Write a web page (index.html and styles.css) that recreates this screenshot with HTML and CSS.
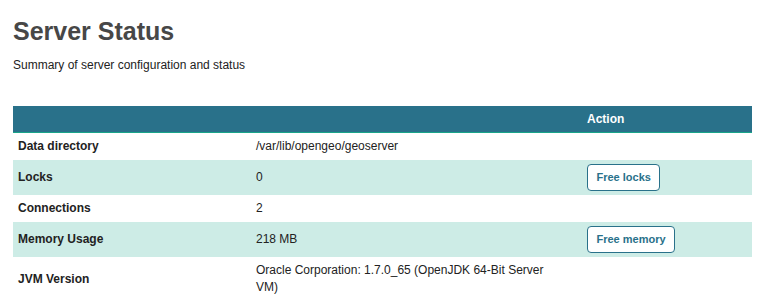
FILE: index.html
```html
<!DOCTYPE html>
<html lang="en">
  <head>
    <meta charset="UTF-8" />
    <title>Server Status</title>
    <link rel="stylesheet" href="styles.css">
  </head>
  <body>
    <h1 class="title">Server Status</h1>
    <p class="subtitle">Summary of server configuration and status</p>

    <table class="status">
      <colgroup>
        <col class="col-label" />
        <col class="col-value" />
        <col class="col-action" />
      </colgroup>
      <thead>
        <tr>
          <th></th>
          <th></th>
          <th>Action</th>
        </tr>
      </thead>
      <tbody>
        <tr>
          <td class="label">Data directory</td>
          <td>/var/lib/opengeo/geoserver</td>
          <td></td>
        </tr>
        <tr class="odd">
          <td class="label">Locks</td>
          <td>0</td>
          <td class="action"><button class="btn">Free locks</button></td>
        </tr>
        <tr>
          <td class="label">Connections</td>
          <td>2</td>
          <td></td>
        </tr>
        <tr class="odd">
          <td class="label">Memory Usage</td>
          <td>218 MB</td>
          <td class="action"><button class="btn">Free memory</button></td>
        </tr>
        <tr>
          <td class="label">JVM Version</td>
          <td class="wrap">Oracle Corporation: 1.7.0_65 (OpenJDK 64-Bit Server VM)</td>
          <td></td>
        </tr>
      </tbody>
    </table>
  </body>
</html>
```

FILE: styles.css
```css
body {
  margin: 0;
  padding: 0 8px 0 13px;
  font-family: 'Liberation Sans', Arial, sans-serif;
  color: #222;
  background: #fff;
}
.title {
  margin: 15px 0 0;
  font-size: 25px;
  line-height: 32px;
  font-weight: bold;
  color: #474747;
}
.subtitle {
  margin: 10px 0 0;
  font-size: 12px;
  line-height: 16px;
}
.status {
  margin-top: 33px;
  width: 739px;
  border-collapse: collapse;
  table-layout: fixed;
  font-size: 12px;
}
.col-label {
  width: 238px;
}
.col-value {
  width: 331px;
}
.status th {
  background: #29718a;
  color: #fff;
  text-align: left;
  font-weight: bold;
  height: 26px;
  padding: 0 5px;
  border-bottom: 1px solid #1aa58a;
}
.status td {
  padding: 5px 5px 4.5px;
  line-height: 17px;
  vertical-align: middle;
}
.status td.action {
  padding: 4px 5px 4.5px;
  line-height: 0;
}
.status tr.odd td {
  background: #cdece6;
}
.status td.label {
  font-weight: bold;
}
.status td.wrap {
  padding-right: 34px;
}
.btn {
  display: inline-block;
  vertical-align: middle;
  font-family: 'Liberation Sans', Arial, sans-serif;
  font-size: 11px;
  font-weight: bold;
  color: #29718a;
  background: #fff;
  border: 1px solid #29718a;
  border-radius: 4px;
  height: 27px;
  padding: 0 8.5px;
  cursor: pointer;
}
```
